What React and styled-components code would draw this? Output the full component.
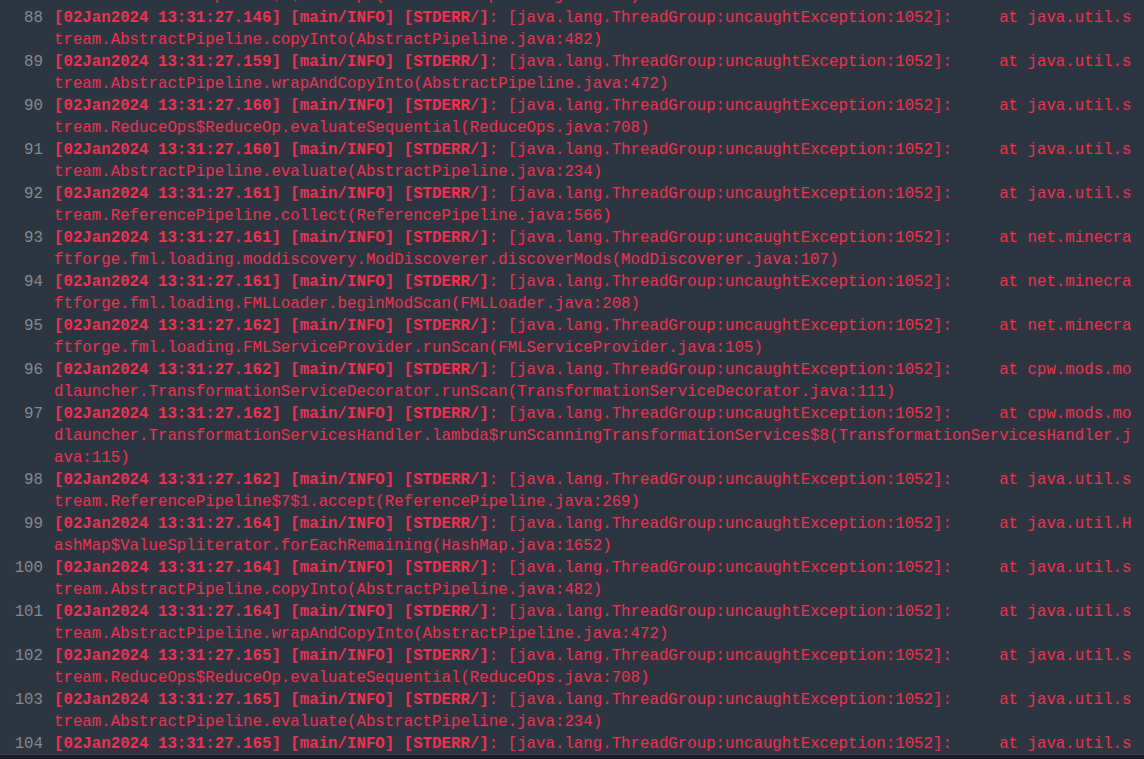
import styled, { createGlobalStyle } from "styled-components";

const GlobalStyle = createGlobalStyle`
  html, body {
    margin: 0;
    padding: 0;
    background: #2d3640;
  }
`;

const Viewer = styled.div`
  width: 1144px;
  height: 759px;
  display: flex;
  flex-direction: column;
  background: #2d3640;
  overflow: hidden;
`;

const Scroller = styled.div`
  flex: 1;
  overflow: hidden;
`;

const Lines = styled.div`
  margin-top: -15px;
  font-family: "Liberation Mono", "DejaVu Sans Mono", monospace;
  font-size: 15.75px;
  line-height: 22px;
`;

const Row = styled.div`
  display: grid;
  grid-template-columns: 43px calc(114ch + 4px);
  column-gap: 11px;
`;

const LineNo = styled.span`
  text-align: right;
  color: #828a92;
`;

const Text = styled.span`
  color: #ec3252;
  white-space: pre-wrap;
  word-break: break-all;
`;

const Prefix = styled.b`
  font-weight: 700;
`;

const BottomBar = styled.div`
  height: 4px;
  flex-shrink: 0;
  background: #1c1b23;
  border-top: 1px solid #3a3f4a;
`;

const TAIL = ": [java.lang.ThreadGroup:uncaughtException:1052]:     at ";

const entries = [
  { n: 88, t: "146", at: "java.util.stream.AbstractPipeline.copyInto(AbstractPipeline.java:482)" },
  { n: 89, t: "159", at: "java.util.stream.AbstractPipeline.wrapAndCopyInto(AbstractPipeline.java:472)" },
  { n: 90, t: "160", at: "java.util.stream.ReduceOps$ReduceOp.evaluateSequential(ReduceOps.java:708)" },
  { n: 91, t: "160", at: "java.util.stream.AbstractPipeline.evaluate(AbstractPipeline.java:234)" },
  { n: 92, t: "161", at: "java.util.stream.ReferencePipeline.collect(ReferencePipeline.java:566)" },
  { n: 93, t: "161", at: "net.minecraftforge.fml.loading.moddiscovery.ModDiscoverer.discoverMods(ModDiscoverer.java:107)" },
  { n: 94, t: "161", at: "net.minecraftforge.fml.loading.FMLLoader.beginModScan(FMLLoader.java:208)" },
  { n: 95, t: "162", at: "net.minecraftforge.fml.loading.FMLServiceProvider.runScan(FMLServiceProvider.java:105)" },
  { n: 96, t: "162", at: "cpw.mods.modlauncher.TransformationServiceDecorator.runScan(TransformationServiceDecorator.java:111)" },
  { n: 97, t: "162", at: "cpw.mods.modlauncher.TransformationServicesHandler.lambda$runScanningTransformationServices$8(TransformationServicesHandler.java:115)" },
  { n: 98, t: "162", at: "java.util.stream.ReferencePipeline$7$1.accept(ReferencePipeline.java:269)" },
  { n: 99, t: "164", at: "java.util.HashMap$ValueSpliterator.forEachRemaining(HashMap.java:1652)" },
  { n: 100, t: "164", at: "java.util.stream.AbstractPipeline.copyInto(AbstractPipeline.java:482)" },
  { n: 101, t: "164", at: "java.util.stream.AbstractPipeline.wrapAndCopyInto(AbstractPipeline.java:472)" },
  { n: 102, t: "165", at: "java.util.stream.ReduceOps$ReduceOp.evaluateSequential(ReduceOps.java:708)" },
  { n: 103, t: "165", at: "java.util.stream.AbstractPipeline.evaluate(AbstractPipeline.java:234)" },
  { n: 104, t: "165", at: "java.util.stream.ReferencePipeline.collect(ReferencePipeline.java:566)" },
];

const LogRow = ({ n, t, at }) => (
  <Row>
    <LineNo>{n}</LineNo>
    <Text>
      <Prefix>{`[02Jan2024 13:31:27.${t}] [main/INFO] [STDERR/]`}</Prefix>
      {TAIL + at}
    </Text>
  </Row>
);

const App = () => {
  return (
    <Viewer>
      <GlobalStyle />
      <Scroller>
        <Lines>
          {/* tail of line 87, scrolled mostly out of view */}
          <Row>
            <LineNo />
            <Text>tream.ReferencePipeline$3$1.accept(ReferencePipeline.java:197)</Text>
          </Row>
          {entries.map((e) => (
            <LogRow key={e.n} {...e} />
          ))}
        </Lines>
      </Scroller>
      <BottomBar />
    </Viewer>
  );
};

export default App;
